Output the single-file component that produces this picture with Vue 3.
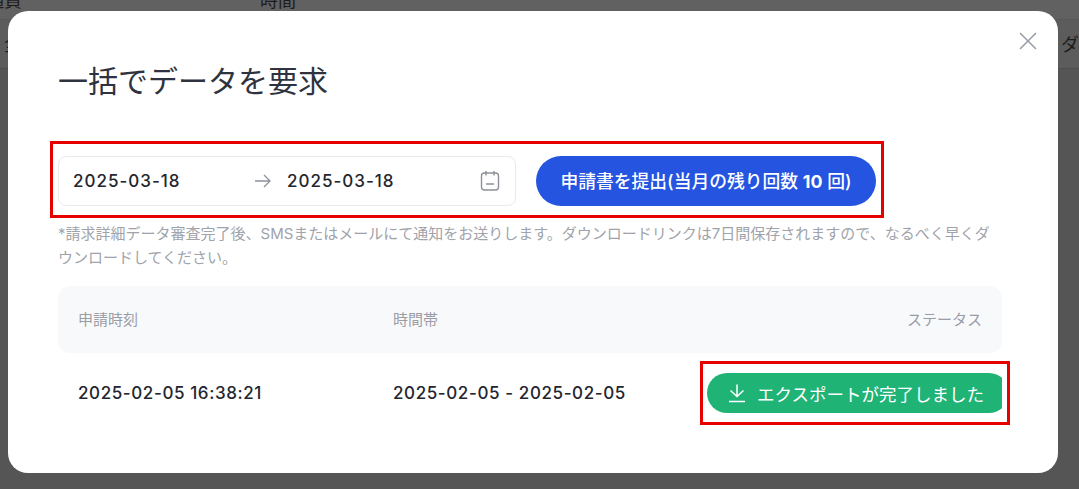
<script setup>
const columns = [
  { key: 'time', label: '申請時刻' },
  { key: 'span', label: '時間帯' },
  { key: 'status', label: 'ステータス' }
]
</script>

<template>
  <div class="page">
    <div class="backdrop-table">
      <div class="bg-head"><span class="bg-a">通貨</span><span class="bg-b">時間</span></div>
      <div class="bg-row"><span class="bg-c">全</span><span class="bg-d">ダ</span></div>
    </div>

    <div class="modal">
      <button class="close" aria-label="閉じる">
        <svg width="18" height="18" viewBox="0 0 18 18" fill="none" stroke="#9a9ea8" stroke-width="1.6">
          <path d="M1 1 L17 17 M17 1 L1 17" />
        </svg>
      </button>
      <h1 class="title">一括でデータを要求</h1>

      <div class="form-row">
        <div class="picker">
          <span class="date">2025-03-18</span>
          <svg class="arrow" width="18" height="14" viewBox="0 0 18 14" fill="none" stroke="#8d9199" stroke-width="1.3">
            <path d="M1 7 H16 M10 1 L16 7 L10 13" />
          </svg>
          <span class="date">2025-03-18</span>
          <svg class="cal" width="20" height="22" viewBox="0 0 20 22" fill="none" stroke="#8d9199" stroke-width="1.4">
            <rect x="1.5" y="3" width="17" height="17" rx="3" />
            <path d="M6 1 V5.5 M14 1 V5.5 M6 14 H14" />
          </svg>
        </div>
        <button class="submit">申請書を提出(当月の残り回数 <b>10</b> 回)</button>
      </div>

      <p class="note">*請求詳細データ審査完了後、SMSまたはメールにて通知をお送りします。ダウンロードリンクは7日間保存されますので、なるべく早くダウンロードしてください。</p>

      <div class="thead">
        <span v-for="c in columns" :key="c.key" :class="['cell', c.key]">{{ c.label }}</span>
      </div>
      <div class="tbody">
        <span class="cell time">2025-02-05 16:38:21</span>
        <span class="cell span">2025-02-05 - 2025-02-05</span>
        <div class="status-clip">
          <button class="done">
            <svg width="18" height="20" viewBox="0 0 18 20" fill="none" stroke="#fff" stroke-width="1.5">
              <path d="M9 1.5 V13.5 M2.5 7.5 L9 13.5 L15.5 7.5 M1 18.5 H17" />
            </svg>
            エクスポートが完了しました
          </button>
        </div>
      </div>
    </div>

    <div class="mark mark-form"></div>
    <div class="mark mark-done"></div>
  </div>
</template>

<style scoped>
.page {
  position: relative;
  width: 1079px;
  height: 489px;
  overflow: hidden;
  background: #555555;
  font-family: Inter, "Noto Sans CJK JP", sans-serif;
}
.backdrop-table {
  color: #1c1c1c;
  font-size: 18px;
}
.bg-head {
  height: 20px;
  background: #616161;
  border-bottom: 1px solid #575757;
  position: relative;
  overflow: hidden;
  box-sizing: border-box;
}
.bg-row {
  height: 49px;
  background: #5c5c5c;
  border-bottom: 1px solid #4e4e4e;
  box-sizing: border-box;
  position: relative;
  overflow: hidden;
}
.bg-a { position: absolute; left: -14px; top: -14px; }
.bg-b { position: absolute; left: 260px; top: -14px; }
.bg-c { position: absolute; left: 4px; top: 10px; }
.bg-d { position: absolute; left: 1061px; top: 10px; }

.modal {
  position: absolute;
  left: 8px;
  top: 11px;
  width: 1050px;
  height: 462px;
  box-sizing: border-box;
  padding: 0 56px 0 50px;
  background: #fff;
  border-radius: 20px;
}
.close {
  position: absolute;
  top: 21px;
  right: 21px;
  width: 18px;
  height: 18px;
  padding: 0;
  border: 0;
  background: none;
  line-height: 0;
}
.title {
  margin: 0;
  padding-top: 52px;
  height: 93px;
  box-sizing: border-box;
  font-size: 30px;
  line-height: 36px;
  font-weight: 400;
  color: #2f3340;
}
.form-row {
  display: flex;
  gap: 20px;
  margin-top: 52px;
}
.picker {
  display: flex;
  align-items: center;
  box-sizing: border-box;
  width: 458px;
  height: 50px;
  padding: 0 15px 0 14px;
  border: 1px solid #e8eaf0;
  border-radius: 8px;
}
.date {
  font-size: 17px;
  font-weight: 500;
  letter-spacing: 1px;
  color: #23262f;
  width: 107px;
  white-space: nowrap;
}
.arrow { margin: 0 15px 0 74px; }
.cal { margin-left: auto; }
.submit {
  width: 340px;
  height: 50px;
  padding: 0 0 2px;
  border: 0;
  border-radius: 25px;
  background: #2454e0;
  color: #fff;
  font-family: inherit;
  font-size: 17.8px;
  font-weight: 500;
  white-space: nowrap;
}
.submit b { font-weight: 700; }
.note {
  margin: 16px 0 0;
  font-size: 15px;
  line-height: 24px;
  color: #a0a3aa;
}
.thead {
  display: flex;
  align-items: center;
  height: 67px;
  margin-top: 16px;
  padding: 0 20px 3px;
  box-sizing: border-box;
  border-radius: 12px;
  background: #f8f9fb;
  color: #9a9da5;
  font-size: 15px;
}
.tbody {
  display: flex;
  align-items: center;
  height: 80px;
  padding: 0 0 0 20px;
  font-size: 17px;
  font-weight: 500;
  letter-spacing: 0.6px;
  color: #23262f;
}
.cell.time { width: 315px; flex: none; }
.cell.span { width: 314px; flex: none; }
.cell.status { margin-left: auto; }
.status-clip {
  width: 295px;
  height: 40px;
  overflow: hidden;
  flex: none;
}
.done {
  display: flex;
  align-items: center;
  gap: 11px;
  width: 302px;
  height: 40px;
  padding: 0 0 0 21px;
  box-sizing: border-box;
  border: 0;
  border-radius: 20px;
  background: #20b376;
  color: #fff;
  font-family: inherit;
  font-size: 17.5px;
  font-weight: 400;
  letter-spacing: 0;
  white-space: nowrap;
}
.mark {
  position: absolute;
  box-sizing: border-box;
  border: 3px solid #e60000;
}
.mark-form { left: 50px; top: 141px; width: 834px; height: 77px; }
.mark-done { left: 700px; top: 361px; width: 310px; height: 64px; }
</style>
